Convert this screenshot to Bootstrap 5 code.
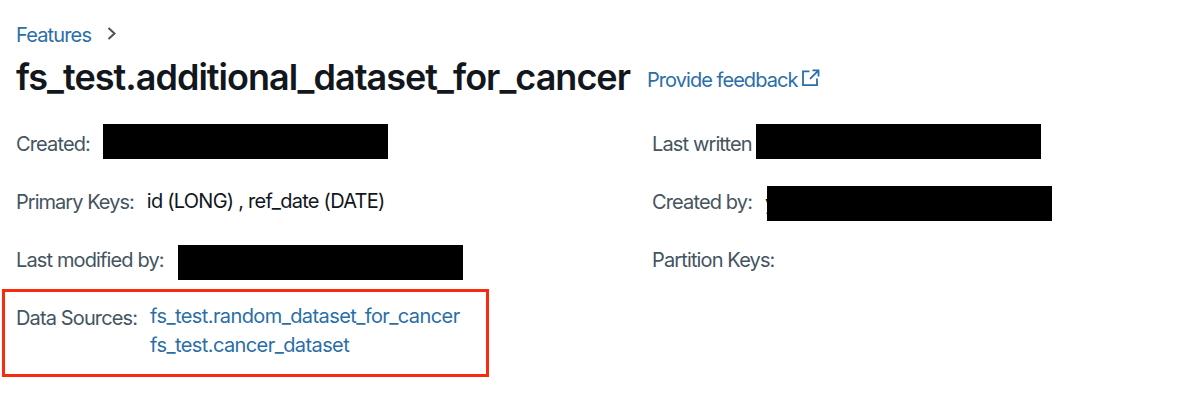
<!DOCTYPE html>
<html lang="en">
<head>
  <meta charset="UTF-8">
  <meta name="viewport" content="width=device-width, initial-scale=1">
  <title>fs_test.additional_dataset_for_cancer</title>
  <link href="https://cdn.jsdelivr.net/npm/bootstrap@5.3.0/dist/css/bootstrap.min.css" rel="stylesheet">
  <style>
    body {
      font-family: "Inter", "Liberation Sans", sans-serif;
      font-size: 20px;
      line-height: 28px;
      letter-spacing: -0.6px;
      color: #11171c;
      background: #fff;
    }
    a, a:hover { color: #2a6ea8; }
    .page-head { padding: 20px 16px 0; height: 116px; }
    .crumbs { height: 29px; }
    .crumbs a { letter-spacing: -0.85px; }
    .crumbs svg { margin: -1px 0 0 16px; }
    .page-title {
      font-size: 36px;
      font-weight: 600;
      line-height: 44px;
      letter-spacing: -0.98px;
      margin-top: 6px;
      color: #11171c;
    }
    .feedback { margin: 12px 0 0 17px; letter-spacing: -0.95px; }
    .feedback svg { margin: -4px 0 0 4px; }
    .left-col { width: 636px; }
    .field { height: 58px; padding-left: 16px; }
    .field-label { color: #445461; margin: -2px 13px 0 0; letter-spacing: -0.87px; }
    .field-value { margin-top: -4px; letter-spacing: -0.75px; }
    .key-label { letter-spacing: -0.97px; }
    .redacted { width: 285px; height: 35px; background: #000; }
    .bar-up { margin-top: -8px; }
    .bar-down { margin: 3px 0 0 1px; }
    .sources {
      width: 487px;
      height: 88px;
      margin: -1px 0 0 2px;
      padding: 10px 0 0 11px;
      border: 3px solid #f92a0d;
    }
    .sources .field-label { margin-top: 2px; }
    .sources a { line-height: 29px; letter-spacing: -0.59px; }
  </style>
</head>
<body>
  <header class="page-head">
    <nav class="crumbs d-flex align-items-center">
      <a href="#" class="text-decoration-none">Features</a>
      <svg width="10" height="14" viewBox="0 0 10 14" fill="none" stroke="#445461" stroke-width="2"><path d="M1.500 1 7.500 6.500l-6 5.500"/></svg>
    </nav>
    <div class="d-flex align-items-center">
      <h1 class="page-title mb-0">fs_test.additional_dataset_for_cancer</h1>
      <a href="#" class="feedback text-decoration-none text-nowrap d-flex align-items-center">
        <span>Provide feedback</span>
        <svg width="19" height="18" viewBox="0 0 19 18" fill="none" stroke="#2a6ea8" stroke-width="1.8"><path d="M8.500 2.400H2v13.700h14V9.500M11.500 1.400h6v6M17 1.900 9 9.900"/></svg>
      </a>
    </div>
  </header>

  <main class="d-flex">
    <div class="left-col flex-shrink-0">
      <div class="field d-flex align-items-center">
        <span class="field-label">Created:</span>
        <span class="redacted bar-up"></span>
      </div>
      <div class="field d-flex align-items-center">
        <span class="field-label key-label">Primary Keys:</span>
        <span class="field-value">id (LONG) , ref_date (DATE)</span>
      </div>
      <div class="field d-flex align-items-center">
        <span class="field-label">Last modified by:</span>
        <span class="redacted bar-down"></span>
      </div>
      <div class="sources d-flex align-items-start">
        <span class="field-label">Data Sources:</span>
        <div class="d-flex flex-column">
          <a href="#" class="text-decoration-none">fs_test.random_dataset_for_cancer</a>
          <a href="#" class="text-decoration-none">fs_test.cancer_dataset</a>
        </div>
      </div>
    </div>

    <div class="right-col">
      <div class="field d-flex align-items-center">
        <span class="field-label me-1">Last written</span>
        <span class="redacted bar-up ms-auto"></span>
      </div>
      <div class="field d-flex align-items-center">
        <span class="field-label">Created by:</span>
        <span class="d-flex align-items-center position-relative">y<span class="redacted position-absolute" style="left: 2px"></span></span>
      </div>
      <div class="field d-flex align-items-center">
        <span class="field-label">Partition Keys:</span>
      </div>
    </div>
  </main>

  <script src="https://cdn.jsdelivr.net/npm/bootstrap@5.3.0/dist/js/bootstrap.bundle.min.js"></script>
</body>
</html>
